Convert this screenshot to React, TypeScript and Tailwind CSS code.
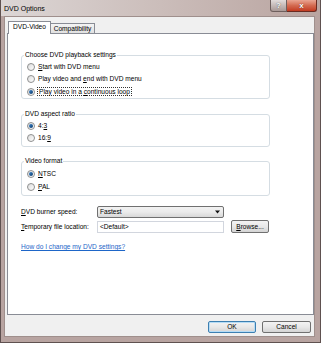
import type { ReactNode } from "react";

function Radio({ checked }: { checked?: boolean }) {
  return (
    <span className="flex h-[8px] w-[8px] shrink-0 items-center justify-center rounded-full border border-[#8e8f8f] bg-gradient-to-br from-[#dcdcdc] to-[#ffffff]">
      {checked && (
        <span className="h-[4px] w-[4px] rounded-full bg-gradient-to-br from-[#3b86cf] to-[#0d3a68]" />
      )}
    </span>
  );
}

function Option({
  children,
  checked,
  focused,
  h,
}: {
  children: ReactNode;
  checked?: boolean;
  focused?: boolean;
  h: string;
}) {
  return (
    <div className={`flex items-center gap-[2px] pl-[5px] ${h}`}>
      <Radio checked={checked} />
      <span
        className={
          focused
            ? "border border-dotted border-[#333] px-[1px] leading-[7px]"
            : "px-[1px]"
        }
      >
        {children}
      </span>
    </div>
  );
}

function Group({
  title,
  className,
  children,
}: {
  title: string;
  className: string;
  children: ReactNode;
}) {
  return (
    <fieldset
      className={`w-[249px] rounded-[3px] border border-[#d5dde3] ${className}`}
    >
      <legend className="ml-[2px] px-[1px] leading-[8px]">{title}</legend>
      {children}
    </fieldset>
  );
}

function WinButton({
  children,
  primary,
  className,
}: {
  children: ReactNode;
  primary?: boolean;
  className: string;
}) {
  return (
    <div
      className={`flex items-center justify-center rounded-[2px] border bg-gradient-to-b from-[#f3f3f3] via-[#e8e8e8] to-[#d4d4d4] ${
        primary ? "border-[#3c7fb1] shadow-[inset_0_0_0_1px_#b6dcf5]" : "border-[#707070]"
      } ${className}`}
    >
      {children}
    </div>
  );
}

export default function App() {
  return (
    <div className="flex h-[343px] w-[321px] flex-col border-x border-b border-[#5f5150] bg-[#b8a4a1] font-['Liberation_Sans',Arial,sans-serif] text-[6.6px] leading-[8px] text-black">
      {/* Title bar */}
      <div className="flex h-[16px] shrink-0 items-start bg-gradient-to-r from-[#dcd6d5] via-[#cbbdba] to-[#b9a4a0] pr-[3px]">
        <span className="mt-[5px] pl-[3px] text-[7px]">DVD Options</span>
        <div className="ml-auto flex h-[12px]">
          <div className="flex w-[17px] items-center justify-center rounded-bl-[3px] border border-t-0 border-[#6e5f5d] bg-gradient-to-b from-[#e2dcdb] to-[#a99996] text-[8px] font-bold text-white [text-shadow:0_0_1px_#333]">
            ?
          </div>
          <div className="flex w-[30px] items-center justify-center rounded-br-[3px] border border-l-0 border-t-0 border-[#6a2a20] bg-gradient-to-b from-[#e9a592] via-[#d36a50] to-[#c2391f] text-[8px] font-bold text-white [text-shadow:0_0_1px_#4a1208]">
            x
          </div>
        </div>
      </div>

      {/* Client area */}
      <div className="mx-[3px] mr-[5px] flex h-[321px] flex-col border border-[#9f8f8c] bg-[#f0f0f0] px-[2px] pt-[4px]">
        {/* Tabs */}
        <div className="relative z-10 -mb-px flex h-[13px] items-end pl-[1px]">
          <div className="flex h-[13px] w-[43px] items-center justify-center border-x border-t border-[#898c95] bg-white pb-[2px]">
            DVD-Video
          </div>
          <div className="mb-px flex h-[10px] w-[44px] items-center justify-center border-r border-t border-[#898c95] bg-gradient-to-b from-[#f4f4f4] to-[#e1e1e1]">
            Compatibility
          </div>
        </div>

        {/* Panel */}
        <div className="flex h-[282px] w-[307px] flex-col border border-[#898c95] bg-white pl-[13px] pt-[17px]">
          <Group title="Choose DVD playback settings" className="pt-[2px]">
            <Option h="h-[12px]">
              <u>S</u>tart with DVD menu
            </Option>
            <Option h="h-[12px]">
              Play video and <u>e</u>nd with DVD menu
            </Option>
            <Option h="h-[13px]" checked focused>
              Play video in a <u>c</u>ontinuous loop
            </Option>
          </Group>

          <Group title="DVD aspect ratio" className="mt-[11px] pb-[2px] pt-[2px]">
            <Option h="h-[12px]" checked>
              4:<u>3</u>
            </Option>
            <Option h="h-[12px]">
              16:<u>9</u>
            </Option>
          </Group>

          <Group title="Video format" className="mt-[10px] pb-[2px] pt-[3px]">
            <Option h="h-[12px]" checked>
              <u>N</u>TSC
            </Option>
            <Option h="h-[13px]">
              <u>P</u>AL
            </Option>
          </Group>

          <div className="mt-[10px] flex h-[12px] items-center">
            <span className="w-[76px]">
              <u>D</u>VD burner speed:
            </span>
            <div className="flex h-[12px] w-[127px] items-center rounded-[2px] border border-[#707070] bg-gradient-to-b from-[#f2f2f2] via-[#ebebeb] to-[#d8d8d8] pl-[2px] pr-[2px]">
              <span>Fastest</span>
              <svg className="ml-auto" width="6" height="4" viewBox="0 0 6 4">
                <path d="M0 0.5 H5 L2.5 3.5 Z" fill="#111" />
              </svg>
            </div>
          </div>

          <div className="mt-[2px] flex h-[13px] items-center">
            <span className="w-[76px]">
              <u>T</u>emporary file location:
            </span>
            <div className="flex h-[12px] w-[127px] items-center border border-[#d2d6de] bg-white pl-[2px]">
              &lt;Default&gt;
            </div>
            <WinButton className="ml-[7px] h-[13px] w-[38px]">
              <span>
                <u>B</u>rowse...
              </span>
            </WinButton>
          </div>

          <div className="mt-[10px] flex">
            <span className="text-[#1e66c8] underline">How do I change my DVD settings?</span>
          </div>
        </div>

        {/* Buttons */}
        <div className="mt-[6px] flex justify-end gap-[6px] pr-[1px]">
          <WinButton primary className="h-[12px] w-[48px]">
            OK
          </WinButton>
          <WinButton className="h-[12px] w-[49px]">Cancel</WinButton>
        </div>
      </div>
    </div>
  );
}
